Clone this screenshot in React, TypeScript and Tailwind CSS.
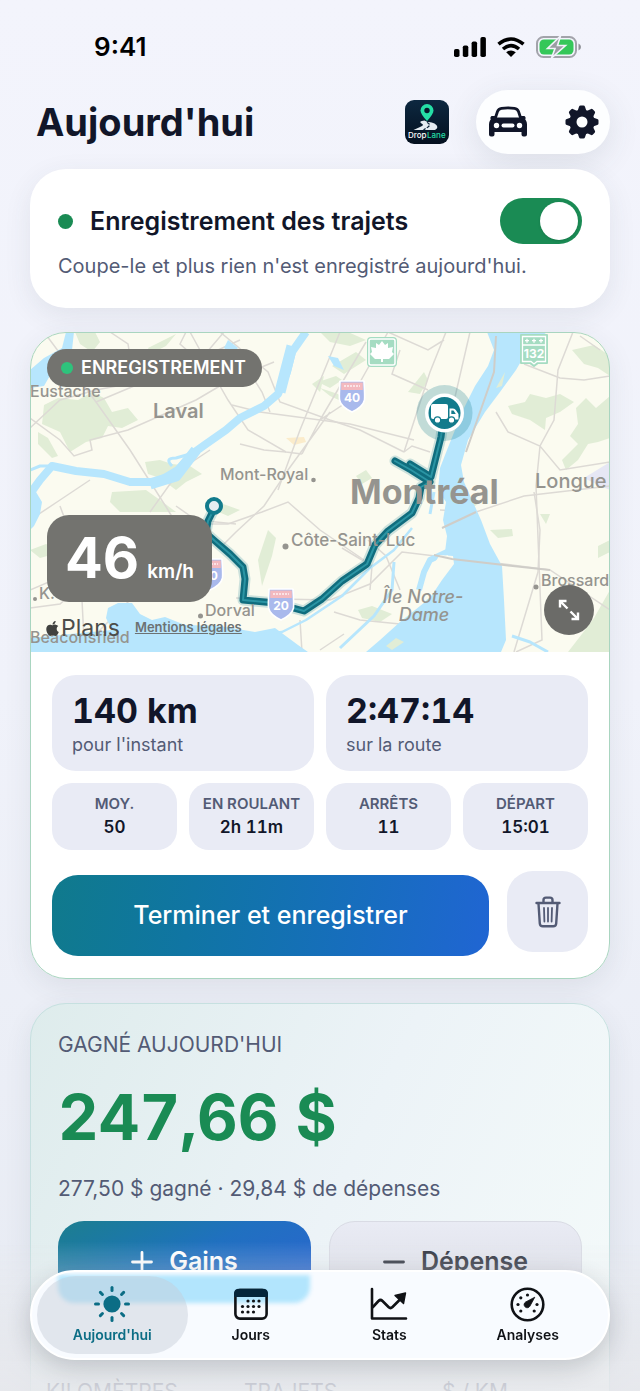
import { useState } from "react"
import type { ReactNode } from "react"
import { FaApple } from "react-icons/fa"

const totals = [
  { value: "140 km", label: "pour l'instant" },
  { value: "2:47:14", label: "sur la route" },
]

const details = [
  { label: "MOY.", value: "50" },
  { label: "EN ROULANT", value: "2h 11m" },
  { label: "ARRÊTS", value: "11" },
  { label: "DÉPART", value: "15:01" },
]

const tabs = [
  { name: "Aujourd'hui", icon: <SunIcon /> },
  { name: "Jours", icon: <CalendarIcon /> },
  { name: "Stats", icon: <ChartIcon /> },
  { name: "Analyses", icon: <GaugeIcon /> },
]

function SunIcon() {
  return (
    <svg width="36" height="36" viewBox="0 0 36 36" fill="currentColor" aria-hidden="true">
      <circle cx="18" cy="18" r="8.6" />
      {[0, 45, 90, 135, 180, 225, 270, 315].map((angle) => (
        <rect key={angle} x="16.5" y="0" width="3" height="6" rx="1.5" transform={`rotate(${angle} 18 18)`} />
      ))}
    </svg>
  )
}

function CalendarIcon() {
  const dots = [
    [14, 13], [19.5, 13], [25, 13],
    [8.5, 18.5], [14, 18.5], [19.5, 18.5], [25, 18.5],
    [8.5, 24], [14, 24], [19.5, 24],
  ]
  return (
    <svg width="34" height="32" viewBox="0 0 34 32" aria-hidden="true">
      <rect x="1.4" y="2" width="31.2" height="28.6" rx="4.5" fill="none" stroke="currentColor" strokeWidth="2.6" />
      <path d="M0 9V5.5Q0 .7 5 .7H29Q34 .7 34 5.5V9Z" fill="#04253a" />
      {dots.map(([x, y]) => (
        <circle key={`${x}-${y}`} cx={x} cy={y} r="1.6" fill="currentColor" />
      ))}
    </svg>
  )
}

function ChartIcon() {
  return (
    <svg width="38" height="34" viewBox="0 0 38 34" fill="none" stroke="currentColor" strokeWidth="2.6" aria-hidden="true">
      <path d="M2 2V31.5H36" strokeLinecap="round" strokeLinejoin="round" />
      <path d="M2.5 20.5L8.5 14Q10.5 12 12.5 14L18.5 20Q20.5 22 22.5 20L30 12.5" strokeLinejoin="round" />
      <path d="M35.5 6L33.5 16.5L25 8.5Z" fill="currentColor" strokeWidth="1.4" strokeLinejoin="round" />
    </svg>
  )
}

function GaugeIcon() {
  const dots = [[10.8, 24], [8, 17.5], [10.8, 10.8], [17.5, 8], [27, 17.5], [24.2, 24]]
  return (
    <svg width="35" height="35" viewBox="0 0 35 35" aria-hidden="true">
      <circle cx="17.5" cy="17.5" r="15.8" fill="none" stroke="currentColor" strokeWidth="2.6" />
      {dots.map(([x, y]) => (
        <circle key={`${x}-${y}`} cx={x} cy={y} r="1.6" fill="currentColor" />
      ))}
      <path d="M24.8 10.2L19.9 19.2A3.1 3.1 0 1 1 15.6 15Z" fill="currentColor" stroke="currentColor" strokeWidth=".8" strokeLinejoin="round" />
    </svg>
  )
}

function CarIcon() {
  return (
    <svg width="40" height="32" viewBox="0 0 40 32" aria-hidden="true">
      <path d="M7 13L9.5 5.5Q10.5 2.6 13.5 2.3Q20 1.6 26.5 2.3Q29.5 2.6 30.5 5.5L33 13" fill="none" stroke="#111629" strokeWidth="2.8" />
      <path d="M4.5 11.5H35.5Q39 14.5 39 18.5V28.5Q39 30.5 37 30.5H35.5Q33.5 30.5 33.5 28.5V26H6.5V28.5Q6.5 30.5 4.5 30.5H3Q1 30.5 1 28.5V18.5Q1 14.5 4.5 11.5Z" fill="#111629" />
      <path d="M3.5 10H8L6.5 13.5H3Q1.500 11.5 3.5 10ZM36.5 10H32L33.5 13.5H37Q38.5 11.5 36.5 10Z" fill="#111629" />
      <circle cx="8.5" cy="19.5" r="2.7" fill="#fdfeff" />
      <circle cx="31.5" cy="19.5" r="2.7" fill="#fdfeff" />
      <rect x="13.5" y="17.5" width="13" height="4" rx="2" fill="#fdfeff" />
    </svg>
  )
}

function GearIcon() {
  return (
    <svg width="34" height="34" viewBox="0 0 34 34" fill="#111629" aria-hidden="true">
      <circle cx="17" cy="17" r="12.6" />
      {[0, 45, 90, 135, 180, 225, 270, 315].map((angle) => (
        <path key={angle} d="M12.600 6L14 1.8Q14.4.5 15.6.5H18.4Q19.600.5 20 1.8L21.4 6Z" transform={`rotate(${angle} 17 17)`} />
      ))}
      <circle cx="17" cy="17" r="5.5" fill="#fdfeff" />
    </svg>
  )
}

function TrashIcon() {
  return (
    <svg width="26" height="32" viewBox="0 0 26 32" fill="none" stroke="#535b75" strokeWidth="2.4" strokeLinecap="round" strokeLinejoin="round" aria-hidden="true">
      <path d="M1.5 7H24.5M8.5 6.5V4Q8.5 1.6 11 1.6H15Q17.5 1.6 17.5 4V6.5" />
      <path d="M3.5 7.5L4.8 27.5Q5 30.3 7.8 30.3H18.2Q21 30.3 21.2 27.5L22.5 7.5" />
      <path d="M9 12L9.4 25.5M13 12V25.5M17 12L16.6 25.5" strokeWidth="1.8" />
    </svg>
  )
}

function LogoIcon() {
  return (
    <svg width="44" height="44" viewBox="0 0 44 44" role="img" aria-label="DropLane">
      <defs>
        <linearGradient id="logoBg" x1="0" y1="0" x2="0" y2="1">
          <stop offset="0" stopColor="#0d2840" />
          <stop offset="1" stopColor="#04101f" />
        </linearGradient>
      </defs>
      <rect width="44" height="44" rx="9" fill="url(#logoBg)" />
      <path d="M22 21Q15.5 14 15.5 10.5A6.500 6.500 0 0 1 28.5 10.5Q28.5 14 22 21Z" fill="#25dfa6" />
      <circle cx="22" cy="10.5" r="2.7" fill="#07192b" />
      <path d="M19.5 20.5Q13 21 16.5 23.5Q20 25 15 27L8.5 30H30Q35 27 29.5 23.5Q26 21.5 22.5 22Z" fill="#e6ecf2" />
      <path d="M22 22.5Q26.5 24.5 23 27L18.5 30" fill="none" stroke="#0a2036" strokeWidth="1.2" strokeDasharray="3 1.5" />
      <text x="3" y="38" fontSize="8" fontWeight="500" fill="#fff">Drop</text>
      <text x="22" y="38" fontSize="8" fontWeight="500" fill="#25dfa6">Lane</text>
    </svg>
  )
}

function StatusBar() {
  return (
    <div className="flex h-[90px] items-center justify-between pt-1 pr-[29px] pl-[64px]">
      <span className="text-[26px] leading-8 font-semibold text-black">9:41</span>
      <div className="flex items-center gap-[11px]">
        <svg width="32" height="20" viewBox="0 0 32 20" aria-hidden="true">
          <rect x="0" y="12" width="5.5" height="8" rx="1.8" />
          <rect x="8.8" y="8.5" width="5.5" height="11.5" rx="1.8" />
          <rect x="17.6" y="4.5" width="5.5" height="15.5" rx="1.8" />
          <rect x="26.4" y="0" width="5.5" height="20" rx="1.8" />
        </svg>
        <svg width="28" height="20" viewBox="0 0 28 20" fill="none" stroke="#000" strokeWidth="3.6" aria-hidden="true">
          <path d="M1.5 7.2Q14 -3.2 26.5 7.2" />
          <path d="M6 12Q14 5.2 22 12" />
          <path d="M14 20L9.200 15.2Q14 11.6 18.8 15.2Z" fill="#000" stroke="none" />
        </svg>
        <svg width="45" height="22" viewBox="0 0 45 22" aria-hidden="true">
          <rect x="1" y="1" width="39" height="20" rx="6.5" fill="none" stroke="#a2a3aa" strokeWidth="2" />
          <path d="M42.5 7.5Q45 8.5 45 11Q45 13.5 42.5 14.5Z" fill="#8f9097" />
          <rect x="3.5" y="3.5" width="34" height="15" rx="4.5" fill="#35c759" />
          <path d="M24.5 0L11.5 12.5H19L15.5 22L29.5 9.5H21.5Z" fill="#9b9da3" stroke="#f2f3fb" strokeWidth="1.6" />
        </svg>
      </div>
    </div>
  )
}

function Shield({ x, y, number }: { x: number; y: number; number: string }) {
  return (
    <g transform={`translate(${x} ${y})`}>
      <path d="M-12 -14Q-13 -15 -11 -15H11Q13 -15 12 -14Q13 0 12.5 4Q11 11 0 16Q-11 11 -12.5 4Q-13 0 -12 -14Z" fill="#a9b9ec" stroke="#fff" strokeWidth="1.6" />
      <path d="M-10.8 -13.5H10.8V-6H-10.8Z" fill="#f3b9bf" />
      <path d="M-8 -10H8" stroke="#fbe3e5" strokeWidth="2" strokeDasharray="2 1" />
      <text y="6" fontSize="12" fontWeight="700" fill="#fff" textAnchor="middle">{number}</text>
    </g>
  )
}

const ROUTE =
  "M212 513L208 521L206 533L215 541L230 554L243 567L245 579L243 600L275 603L304 611L322 599L342 581L367 564L375 545L388 531L412 513L419 498L421 487M395 461L411 470L430 482L421 487M410 464L431 477L441 437L444 413"

function MapDrawing() {
  return (
    <svg className="block h-[320px] w-full" viewBox="30 332 580 320" preserveAspectRatio="xMidYMid slice" role="img" aria-label="Trajet dans Montréal">
      <rect x="30" y="332" width="580" height="320" fill="#fbfbf0" />
      <g fill="#e1edd6">
        <path d="M44 405L58 398L78 400L92 392L104 398L112 412L128 408L138 420L122 428L108 426L102 438L86 442L70 452L60 432L42 424Z" />
        <path d="M38 432L48 438L58 456L52 458L38 444Z" />
        <path d="M145 462L160 460L172 464L190 466L202 474L186 482L176 490L160 478L148 474Z" />
        <path d="M75 332H95L100 342L92 352L80 344ZM148 348L176 334L166 346L150 354Z" />
        <path d="M318 382L336 376L342 380L330 388ZM332 366L356 352L366 360L344 374ZM320 388L338 394L352 406L330 396Z" />
        <path d="M416 382L424 372L428 380L420 394L408 392Z" />
        <path d="M508 406L525 402L530 394L546 398L560 394L574 402L560 412L546 418L545 430L530 420L512 414Z" />
        <path d="M576 408L586 398L596 408L610 396V438L598 442L588 444L578 460L566 470L562 460L578 444L570 436L578 424Z" />
        <path d="M572 350L594 345L610 356V376L598 368L584 364Z" />
        <path d="M320 332H348L366 340L350 346L330 342Z" />
        <path d="M112 492L146 490L160 500L176 512H120L110 502Z" />
        <path d="M268 530L276 538L272 556L262 586L258 560Z" />
        <path d="M490 530L512 529L513 536L498 538ZM540 514H550L546 524ZM598 546L610 540V552L598 558Z" />
        <path d="M358 610L372 606L392 614L380 622L362 618Z" />
        <path d="M568 652L582 634L594 618L610 590V652Z" />
        <path d="M212 500L240 510L228 516L214 510ZM30 550L46 544L62 552L40 558Z" />
        <path d="M312 384L324 376L320 392ZM356 476L366 470L372 478L362 484ZM470 498L478 504L472 508Z" />
      </g>
      <path d="M286 438L304 437L306 442L294 445Z" fill="#fbeccb" />
      <path d="M584 478L610 462V490L596 484Z" fill="#e6e7f4" />
      <g fill="none" stroke="#dddad5" strokeWidth="1.5">
        <path d="M44 332L96 402L130 450L168 510L186 540M96 402L196 360L240 340M110 332L128 344L130 356" />
        <path d="M30 428L60 400L96 390L190 372L224 332M190 332L212 372L228 400L248 430L286 452L302 454" />
        <path d="M30 418L60 440L74 456L92 450L90 440L128 430L196 400L230 380L274 362" />
        <path d="M220 332L268 372L280 402L330 420L360 430L404 452M340 332L300 430L278 490M286 452L264 450L240 444" />
        <path d="M330 412L288 470L264 506L236 532L220 548M302 454L320 420L350 400L378 350L388 332" />
        <path d="M388 332L428 350L444 340M446 332L430 372L404 452M470 332L452 410L438 440M366 342L320 420" />
        <path d="M232 405L260 412L350 424L414 440M30 590L100 560L190 524L228 524L262 512L288 502L320 530L364 560" />
        <path d="M236 598L330 600L370 584L402 552L452 558L504 564L550 570L610 610" />
        <path d="M496 412L508 432L540 446L560 470L610 462M573 332L558 370L554 420L540 446L536 486L542 640L516 652" />
        <path d="M534 492L540 530L538 572L514 652M440 510L476 512L524 496L610 486M368 540L386 556L400 590" />
        <path d="M30 520L60 500L90 480M60 506L80 560L84 640M176 506L196 520L236 524M300 620L302 652M320 650L344 634M100 650L90 640L130 600" />
        <path d="M334 612L360 620L400 624M342 548L372 566L370 590M30 608L60 604L110 560M186 332L180 344L212 372" />
        <path d="M248 370L262 392L270 412M400 350L392 374L428 390M600 350L580 336M150 512L180 470L210 450M404 452L412 446L430 452" />
        <path d="M524 364L560 378L584 380L610 376" />
      </g>
      <g fill="#b7e6fd">
        <path d="M66 332H74L72 350L60 356L52 372L44 386L30 388V370L44 358L62 348Z" />
        <path d="M487 332L494 350L488 366L475 386L463 410L455 430L447 450L440 468L438 490L446 502L443 520L447 536L445 552L453 562L440 582L425 602L400 622L380 640L366 652H501L506 640L504 600L502 566L490 544L481 520L472 500L464 482L461 465L468 440L485 412L500 392L516 370L530 346L547 332Z" />
        <path d="M30 638L70 634L112 630L106 618L108 608L118 603H132L140 614L152 620L165 617L185 625L220 626L255 632L275 628L298 645L308 652H30Z" />
        <path d="M30 490L36 492L42 502L40 514L34 526L30 530Z" />
        <path d="M228 340L238 348L232 354L224 348ZM328 356L338 358L344 370L334 366Z" />
      </g>
      <g fill="none" stroke="#b7e6fd" strokeLinejoin="round">
        <path d="M306 332L292 352L287 372L278 394L264 406L240 418L226 430L206 444L192 454L178 470L158 482L130 482L104 474L76 471L52 466L40 480L30 494" strokeWidth="8" />
        <path d="M30 470L40 466L52 466M172 466Q164 458 176 458L190 454" strokeWidth="3" />
        <path d="M292 346L280 392M196 450L176 476L150 484" strokeWidth="11" />
        <path d="M447 552L430 560L424 572L419 590" strokeWidth="6" />
        <path d="M256 635L282 632L306 620L342 596L370 568L394 550L412 528" strokeWidth="2.5" />
        <path d="M394 562L392 590L374 616L340 648M456 462L462 486M434 492L430 514" strokeWidth="3" />
        <path d="M512 636L530 642L548 652" strokeWidth="3" />
      </g>
      <path d="M453 556L440 555L428 572L420 602L430 598L442 580L454 564Z" fill="#fbfbf0" />
      <path d="M386 646L396 638L404 642L392 650ZM496 388L505 372L502 386Z" fill="#e1edd6" />
      <path d="M496 336L494 372L466 452M434 555L452 559L504 565L550 570M442 528L476 512" fill="none" stroke="#cfcdc8" strokeWidth="2" />

      <g transform="translate(382 352)">
        <rect x="-15" y="-15" width="30" height="30" rx="4" fill="#a5dcc2" />
        <rect x="-13" y="-13" width="26" height="26" rx="2" fill="none" stroke="#fff" strokeWidth="1.5" />
        <path d="M0 -11L3 -7L6 -9L6 -4L11 -5L10 0L12 2L7 7H1V10H-1V7H-7L-12 2L-10 0L-11 -5L-6 -4L-6 -9L-3 -7Z" fill="#fff" />
      </g>
      <g transform="translate(534 350)">
        <path d="M-13 -15H13V13H4L0 16L-4 13H-13Z" fill="#a5dcc2" stroke="#a5dcc2" strokeWidth="2" strokeLinejoin="round" />
        <path d="M-11.5 -13.5H11.5V11.5H3L0 14L-3 11.5H-11.5ZM-11.5 -5H11.5" fill="none" stroke="#fff" strokeWidth="1.3" />
        <path d="M-9 -9.300H-5M-7 -11.300V-7.300M-2 -9.300H2M0 -11.300V-7.300M5 -9.300H9M7 -11.300V-7.300" stroke="#fff" strokeWidth="1.3" />
        <text y="8" fontSize="12" fontWeight="700" fill="#fff" textAnchor="middle">132</text>
      </g>
      <Shield x={352} y={396} number="40" />
      <Shield x={210} y={574} number="20" />

      <g fill="none" strokeLinecap="round" strokeLinejoin="round">
        <path d={ROUTE} stroke="#127b8c" strokeOpacity=".2" strokeWidth="11" />
        <path d={ROUTE} stroke="#106d7e" strokeWidth="7" />
        <path d={ROUTE} stroke="#2b95a4" strokeWidth="2" />
      </g>
      <Shield x={281} y={604} number="20" />
      <circle cx="214" cy="506" r="7" fill="#e8eef0" stroke="#127b8c" strokeWidth="4" />

      <g fill="#95948f" fontWeight="500" fontSize="16">
        <text x="30" y="397">Eustache</text>
        <text x="153" y="418" fontSize="20" fontWeight="600">Laval</text>
        <text x="220" y="480">Mont-Royal</text>
        <text x="350" y="504" fontSize="34" fontWeight="700">Montréal</text>
        <text x="535" y="488" fontSize="20">Longue</text>
        <text x="291" y="546" fontSize="17">Côte-Saint-Luc</text>
        <text x="205" y="616">Dorval</text>
        <text x="541" y="586">Brossard</text>
        <text x="39" y="599">K.</text>
        <text x="423" y="603" fontSize="18" fontStyle="italic" textAnchor="middle">Île Notre-</text>
        <text x="424" y="621" fontSize="18" fontStyle="italic" textAnchor="middle">Dame</text>
        <text x="30" y="643">Beaconsfield</text>
        <circle cx="313.5" cy="480" r="2.3" />
        <circle cx="285.5" cy="546.5" r="3" />
        <circle cx="200.5" cy="616" r="2.5" />
        <circle cx="536" cy="587" r="2.5" />
        <circle cx="35" cy="599" r="2" />
      </g>

      <circle cx="444.5" cy="413" r="28" fill="#127b8c" fillOpacity=".25" />
      <circle cx="444.5" cy="413" r="19.5" fill="#fff" />
      <circle cx="444.5" cy="413" r="16" fill="#127b8c" />
      <g fill="#fff">
        <rect x="431" y="404" width="17" height="15" rx="2" />
        <path d="M449.500 408.5H453Q455 408.5 456 410.3L458.5 414V419.5H449.500Z" />
        <path d="M451.3 410.5H453.5L455.8 414H451.3Z" fill="#127b8c" />
        <circle cx="437.5" cy="420" r="3.2" stroke="#127b8c" strokeWidth="1.2" />
        <circle cx="451.5" cy="420" r="3.2" stroke="#127b8c" strokeWidth="1.2" />
      </g>
    </svg>
  )
}

function TripMap() {
  return (
    <div className="relative overflow-hidden rounded-t-[36px]">
      <MapDrawing />
      <div className="absolute top-[17px] left-[17px] flex h-[38px] items-center gap-2 rounded-full bg-[#73736f] pr-4 pl-[14px]">
        <span className="size-3 rounded-full bg-[#2ec27c]" />
        <span className="text-[18px] leading-6 font-semibold text-white">ENREGISTREMENT</span>
      </div>
      <div className="absolute top-[183px] left-[17px] flex h-[87px] items-baseline gap-2 rounded-[22px] bg-[#73736f] px-[18px] text-white">
        <span className="text-[56px] leading-[87px] font-bold">46</span>
        <span className="text-[19px] font-semibold">km/h</span>
      </div>
      <div className="absolute bottom-[10px] left-[14px] flex items-center">
        <FaApple className="size-[17px] text-[#40413f]" />
        <span className="text-[23px] leading-7 text-[#4c4d4a]">Plans</span>
        <a href="#mentions" className="ml-[15px] text-[13px] font-semibold text-[#6c7273] underline">Mentions légales</a>
      </div>
      <button type="button" aria-label="Agrandir la carte" className="absolute right-4 bottom-[17px] flex size-[50px] items-center justify-center rounded-full bg-[#6b6b68]">
        <svg width="22" height="22" viewBox="0 0 22 22" fill="none" stroke="#fff" strokeWidth="2.4" aria-hidden="true">
          <path d="M9.5 9.5L2 2M2 8.5V2H8.5M12.5 12.5L20 20M20 13.5V20H13.5" />
        </svg>
      </button>
    </div>
  )
}

function Card({ className, children }: { className: string; children: ReactNode }) {
  return (
    <section className={`relative rounded-[36px] shadow-[0_8px_28px_rgba(60,70,80,0.09)] after:pointer-events-none after:absolute after:inset-0 after:rounded-[36px] ${className}`}>
      {children}
    </section>
  )
}

export default function App() {
  const [recording, setRecording] = useState(true)
  const [tab, setTab] = useState("Aujourd'hui")

  return (
    <div className="relative h-screen overflow-hidden bg-[#f2f3fb] bg-linear-to-b from-[#f3f4fc] via-[#f0f2fa] to-[#e7ebf3] px-[30px] font-[Inter,sans-serif] text-[#111629]">
      <StatusBar />

      <header className="flex h-16 items-center">
        <h1 className="ml-1.5 flex-1 text-[38px] leading-[48px] font-bold">Aujourd'hui</h1>
        <LogoIcon />
        <div className="ml-[27px] flex h-16 w-[134px] items-center justify-between rounded-full bg-[#fdfeff] pr-[11px] pl-3 shadow-[0_8px_32px_rgba(60,70,80,0.12)]">
          <button type="button" aria-label="Véhicule"><CarIcon /></button>
          <button type="button" aria-label="Réglages"><GearIcon /></button>
        </div>
      </header>

      <main className="mt-[15px] flex flex-col gap-6">
        <Card className="h-[139px] bg-white px-7 pt-[29px]">
          <label className="flex h-[46px] items-center">
            <span className={`size-[15px] rounded-full ${recording ? "bg-[#1a8b54]" : "bg-[#a0a4b2]"}`} />
            <span className="ml-[17px] flex-1 text-[25px] leading-8 font-semibold">Enregistrement des trajets</span>
            <input type="checkbox" checked={recording} onChange={() => setRecording(!recording)} className="peer sr-only" />
            <span className="flex h-[46px] w-[82px] items-center rounded-full bg-[#a0a4b2] px-1 peer-checked:justify-end peer-checked:bg-[#1a8b54]">
              <span className="size-[38px] rounded-full bg-white shadow" />
            </span>
          </label>
          <p className="mt-2 text-[20px] leading-7 text-[#535b75]">Coupe-le et plus rien n'est enregistré aujourd'hui.</p>
        </Card>

        <Card className="bg-white after:border after:border-[#a9d5c0]">
          <TripMap />
          <div className="px-[22px] pt-[23px] pb-[23px]">
            <div className="grid grid-cols-2 gap-3">
              {totals.map((item) => (
                <div key={item.label} className="h-24 rounded-[24px] bg-[#e9ebf5] px-5 pt-3.5">
                  <p className="text-[34px] leading-[44px] font-bold tabular-nums">{item.value}</p>
                  <p className="text-[18px] leading-6 text-[#535b75]">{item.label}</p>
                </div>
              ))}
            </div>
            <div className="mt-3 grid grid-cols-4 gap-3">
              {details.map((item) => (
                <div key={item.label} className="h-[67px] rounded-[20px] bg-[#e9ebf5] pt-2.5 text-center">
                  <p className="text-[15px] leading-[22px] font-semibold text-[#535b75]">{item.label}</p>
                  <p className="text-[17px] leading-6 font-semibold tabular-nums">{item.value}</p>
                </div>
              ))}
            </div>
            <div className="mt-[21px] flex items-start gap-[18px]">
              <button type="button" className="mt-1 h-[81px] flex-1 rounded-[26px] bg-linear-100 from-[#107a8c] to-[#2065d3] text-[25px] font-medium text-white">
                Terminer et enregistrer
              </button>
              <button type="button" aria-label="Supprimer le trajet" className="flex size-[81px] items-center justify-center rounded-[26px] bg-[#e9ebf5]">
                <TrashIcon />
              </button>
            </div>
          </div>
        </Card>

        <Card className="bg-linear-115 from-[#deecec] via-[#ecf3f7] to-[#f5fbfa] px-7 pt-7 pb-10 after:border after:border-[#c6e0e0]">
          <h2 className="text-[21px] leading-7 text-[#535b75]">GAGNÉ AUJOURD'HUI</h2>
          <p className="mt-4 text-[63px] leading-[84px] font-bold text-[#1a8b54] tabular-nums">247,66 $</p>
          <p className="mt-4 text-[21px] leading-7 text-[#535b75]">277,50 $ gagné · 29,84 $ de dépenses</p>
          <div className="mt-[18px] grid grid-cols-2 gap-[18px]">
            <button type="button" className="flex h-[81px] items-center justify-center gap-4 rounded-[26px] bg-linear-150 from-[#1d7e8e] via-[#2070c0] to-[#2c64d2] text-[25px] font-semibold text-white">
              <svg width="22" height="22" viewBox="0 0 22 22" stroke="currentColor" strokeWidth="2.8" strokeLinecap="round" aria-hidden="true">
                <path d="M11 1.5V20.5M1.5 11H20.5" />
              </svg>
              Gains
            </button>
            <button type="button" className="flex h-[81px] items-center justify-center gap-4 rounded-[26px] border border-[#d9dbe4] bg-linear-to-b from-[#e9ebf4] to-[#dcdee6] text-[25px] font-semibold text-[#30343f]">
              <svg width="22" height="22" viewBox="0 0 22 22" stroke="currentColor" strokeWidth="2.8" strokeLinecap="round" aria-hidden="true">
                <path d="M1.5 11H20.5" />
              </svg>
              Dépense
            </button>
          </div>
          <div className="mt-[76px] -ml-3 grid grid-cols-[198px_198px_1fr] text-[21px] leading-7 text-[#535b75]">
            <span>KILOMÈTRES</span>
            <span>TRAJETS</span>
            <span>$ / KM</span>
          </div>
        </Card>
      </main>

      <div className="pointer-events-none fixed inset-x-0 bottom-0 h-[150px] bg-linear-to-b from-transparent via-[#e6e8ec]/50 via-40% to-[#e6e7eb]/85" />
      <nav className="fixed inset-x-[30px] bottom-[31px] h-[90px] overflow-hidden rounded-full border-2 border-white bg-[#f8fbff] shadow-[0_8px_24px_rgba(40,45,55,0.2)]">
        <div className="absolute top-[3px] left-[26px] h-[28px] w-[252px] rounded-b-[16px] bg-[#b2e5fd] blur-[2px]" />
        <ul className="relative grid h-full grid-cols-4 items-center px-[11px]">
          {tabs.map((item) => (
            <li key={item.name} className="-mx-1.5">
              <button
                type="button"
                onClick={() => setTab(item.name)}
                className={`flex h-[78px] w-full flex-col items-center rounded-full pt-[9px] ${
                  tab === item.name ? "bg-[#c5cbd6]/45 text-[#0b6d85]" : "text-[#101216]"
                }`}
              >
                <span className="flex h-[38px] items-center">{item.icon}</span>
                <span className="text-[14px] leading-6 font-semibold">{item.name}</span>
              </button>
            </li>
          ))}
        </ul>
      </nav>
    </div>
  )
}
